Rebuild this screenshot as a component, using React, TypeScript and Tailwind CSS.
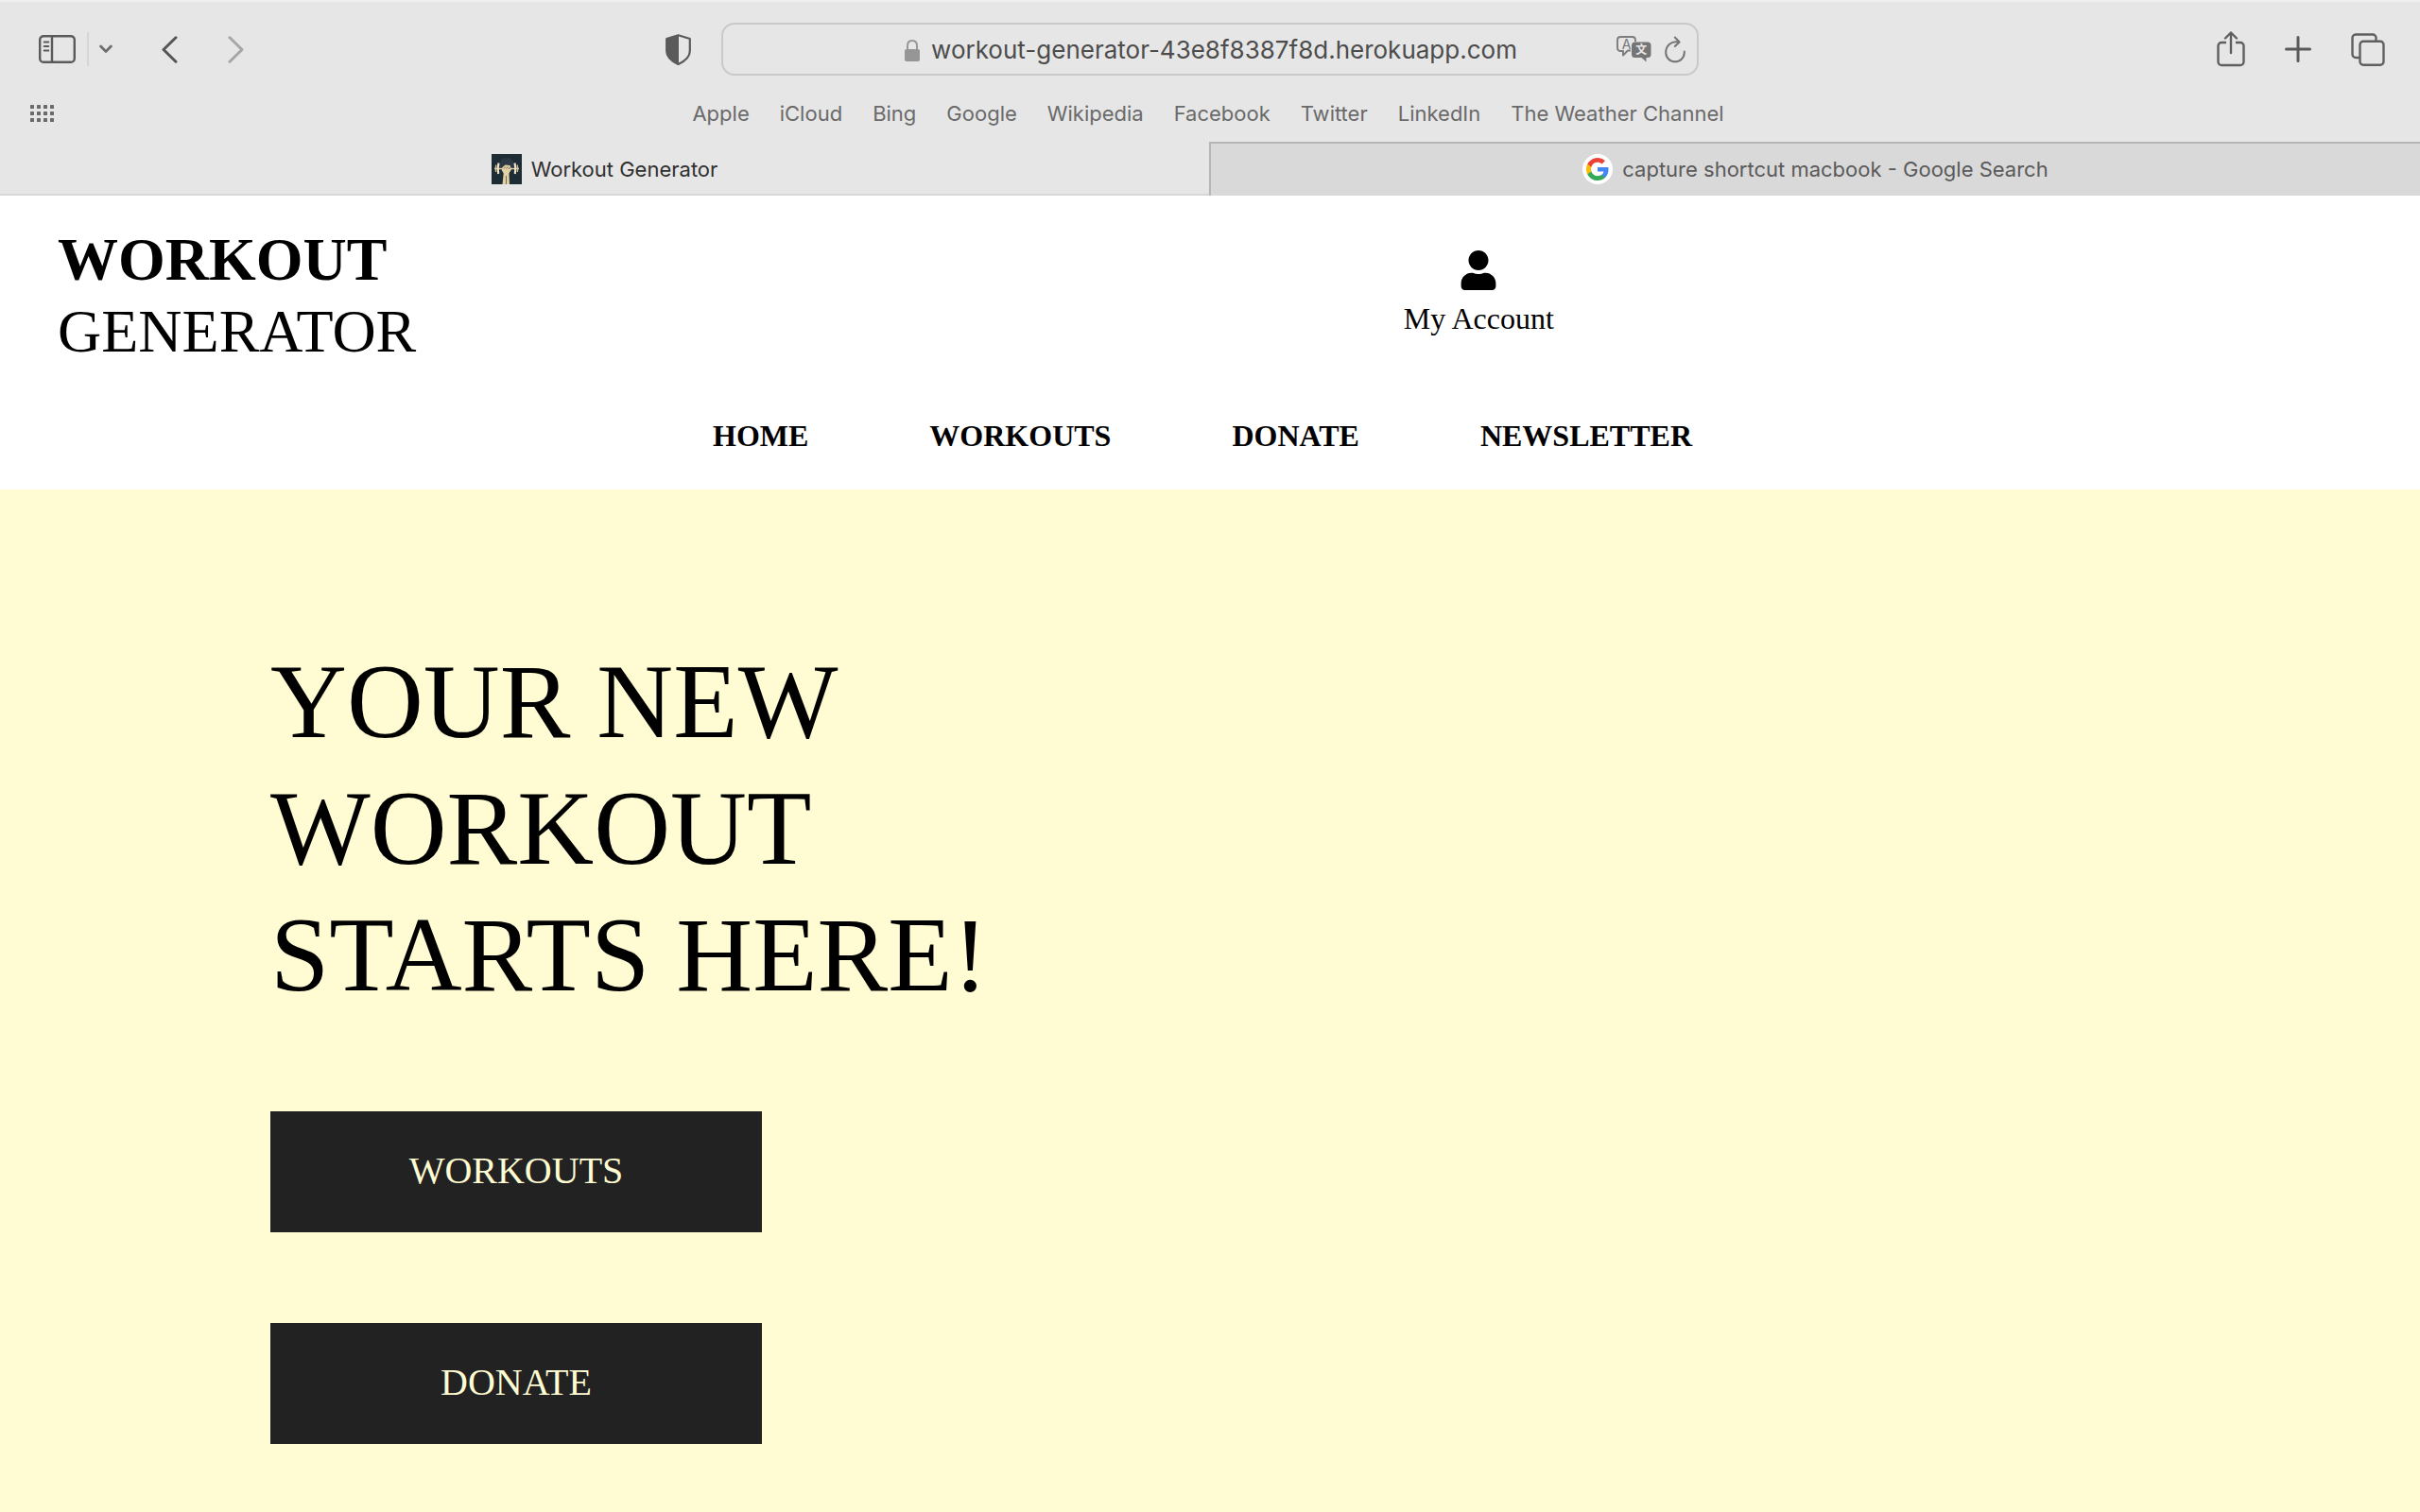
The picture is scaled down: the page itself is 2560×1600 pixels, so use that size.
import React from "react";
import { FaUser } from "react-icons/fa";

const bookmarks = [
  "Apple",
  "iCloud",
  "Bing",
  "Google",
  "Wikipedia",
  "Facebook",
  "Twitter",
  "LinkedIn",
  "The Weather Channel",
];

const navLinks = ["HOME", "WORKOUTS", "DONATE", "NEWSLETTER"];

const actions = ["WORKOUTS", "DONATE"];

function SidebarIcon() {
  return (
    <svg width="39" height="30" viewBox="0 0 39 30" fill="none" stroke="#5a5a5a" strokeWidth="2.4">
      <rect x="1.2" y="1.2" width="36.6" height="27.600" rx="3.800" />
      <path d="M14 1v28" />
      <path d="M5.600 7.500h4.800M5.600 12h4.800M5.600 16.500h4.800" strokeWidth="1.800" strokeLinecap="round" />
    </svg>
  );
}

function SmallChevron() {
  return (
    <svg width="14" height="10" viewBox="0 0 14 10" fill="none" stroke="#6e6e6e" strokeWidth="2.800" strokeLinecap="round" strokeLinejoin="round">
      <path d="M1.600 2l5.400 5.400L12.400 2" />
    </svg>
  );
}

function BackIcon() {
  return (
    <svg width="17" height="29" viewBox="0 0 17 29" fill="none" stroke="#555" strokeWidth="3" strokeLinecap="round" strokeLinejoin="round">
      <path d="M15 1.800L2 14.500 15 27.200" />
    </svg>
  );
}

function ForwardIcon() {
  return (
    <svg width="17" height="29" viewBox="0 0 17 29" fill="none" stroke="#a6a6a6" strokeWidth="3" strokeLinecap="round" strokeLinejoin="round">
      <path d="M2 1.800l13 12.700L2 27.200" />
    </svg>
  );
}

function ShieldIcon() {
  return (
    <svg width="27" height="33" viewBox="0 0 27 33">
      <path d="M13.500 1.200L25.800 5v13c0 6-5 10.600-12.300 14C6.200 28.600 1.200 24 1.200 18V5z" fill="none" stroke="#5a5a5a" strokeWidth="2.200" strokeLinejoin="round" />
      <path d="M14 1.200L1.200 5v13c0 6 5 10.600 12.800 14z" fill="#5a5a5a" />
    </svg>
  );
}

function LockIcon() {
  return (
    <svg width="16" height="23" viewBox="0 0 16 23">
      <rect x="0" y="10" width="16" height="13" rx="2" fill="#969696" />
      <path d="M3 11V6.500C3 3 5 1 8 1s5 2 5 5.500V11" fill="none" stroke="#969696" strokeWidth="1.900" />
    </svg>
  );
}

function TranslateIcon() {
  return (
    <svg width="37" height="28" viewBox="0 0 37 28">
      <path
        d="M15 15.500H12L7 20.500V16H4.500C2.300 16 1 14.700 1 12.500V4.500C1 2.300 2.300 1 4.500 1h12C18.700 1 20 2.300 20 4.500V6"
        fill="none"
        stroke="#7c7c7c"
        strokeWidth="1.900"
        strokeLinejoin="round"
      />
      <path d="M19.500 6.500H33A3.500 3.500 0 0 1 36.500 10v9.500A3.500 3.500 0 0 1 33 23h-1.500v4.500L26.500 23h-7A3.500 3.500 0 0 1 16 19.500V10A3.500 3.500 0 0 1 19.500 6.500z" fill="#757575" />
      <text x="10.500" y="13.500" textAnchor="middle" fontSize="14" fill="#757575" fontFamily="Inter, sans-serif">
        A
      </text>
      <text x="26.300" y="19" textAnchor="middle" fontSize="12" fontWeight="700" fill="#e6e6e6" fontFamily="'Noto Sans CJK SC', sans-serif">
        文
      </text>
    </svg>
  );
}

function ReloadIcon() {
  return (
    <svg width="22" height="30" viewBox="0 0 22 30" fill="none" stroke="#757575" strokeWidth="2" strokeLinecap="round" strokeLinejoin="round">
      <path d="M14.500 7.500C7 6 1.200 11.500 1.200 18.500A9.800 9.800 0 0 0 20.800 18.500V17.500" />
      <path d="M10.800 2.500l4.800 5-4.800 4.500" />
    </svg>
  );
}

function ShareIcon() {
  return (
    <svg width="30" height="38" viewBox="0 0 30 38" fill="none" stroke="#5f5f5f" strokeWidth="2.400" strokeLinecap="round" strokeLinejoin="round">
      <path d="M10 12H5a3.500 3.500 0 0 0-3.500 3.500v17A3.500 3.500 0 0 0 5 36h20a3.500 3.500 0 0 0 3.500-3.500v-17A3.500 3.500 0 0 0 25 12h-5" strokeLinecap="butt" />
      <path d="M15 23V2M9 7.500L15 1.500l6 6" />
    </svg>
  );
}

function PlusIcon() {
  return (
    <svg width="28" height="28" viewBox="0 0 28 28" fill="none" stroke="#5a5a5a" strokeWidth="3" strokeLinecap="round">
      <path d="M14 1.500v25M1.500 14h25" />
    </svg>
  );
}

function TabsIcon() {
  return (
    <svg width="36" height="35" viewBox="0 0 36 35" fill="none" stroke="#5f5f5f" strokeWidth="2.400">
      <path d="M9 26H5a3.500 3.500 0 0 1-3.500-3.500v-17A3.500 3.500 0 0 1 5 1.500h18a3.500 3.500 0 0 1 3.500 3.500v4" />
      <rect x="9.500" y="8.800" width="25" height="25" rx="3.500" />
    </svg>
  );
}

function FavoritesGridIcon() {
  return (
    <svg width="26" height="18" viewBox="0 0 26 18" fill="#6a6a6a">
      {[0, 7, 14].map((y) =>
        [0, 7, 14, 21].map((x) => <rect key={`${x}-${y}`} x={x} y={y} width="4" height="4" rx="0.500" />),
      )}
    </svg>
  );
}

function WorkoutFavicon() {
  return (
    <svg width="32" height="32" viewBox="0 0 32 32">
      <rect width="32" height="32" fill="#1d2c35" />
      <circle cx="16" cy="12" r="8" fill="#2b3a42" />
      <path d="M3 15.500h26" stroke="#e3d5b0" strokeWidth="1.400" />
      <path d="M7.500 9.500Q6 15 7.200 21" fill="none" stroke="#efe3c4" strokeWidth="2.200" />
      <path d="M4.800 11.500Q4 15 4.600 19" fill="none" stroke="#cbbf9f" strokeWidth="1.400" />
      <path d="M24.500 9.500Q26 15 24.800 21" fill="none" stroke="#efe3c4" strokeWidth="2.200" />
      <path d="M27.200 11.500Q28 15 27.400 19" fill="none" stroke="#cbbf9f" strokeWidth="1.400" />
      <path d="M11.500 14l3-2.500 5 .5 1.500 4-2.500 4.500.5 11.500h-7.500l1.200-11.500-2-3.500z" fill="#e3d0a4" />
      <path d="M13 15.500l2-2M15.500 15.500l2-2M18 16l1.500-2M15.500 23v9" stroke="#6b624d" strokeWidth="0.900" />
    </svg>
  );
}

function GoogleFavicon() {
  return (
    <svg width="32" height="32" viewBox="0 0 32 32">
      <circle cx="16" cy="16" r="16" fill="#fff" />
      <g transform="translate(4 4)">
        <path fill="#4285F4" d="M23.500 12.300c0-.8-.1-1.600-.2-2.300H12v4.500h6.500a5.600 5.600 0 0 1-2.400 3.600v3h3.900c2.200-2.100 3.500-5.100 3.500-8.800z" />
        <path fill="#34A853" d="M12 24c3.200 0 6-1.100 8-2.900l-3.900-3c-1.100.7-2.500 1.200-4.100 1.200-3.100 0-5.800-2.100-6.700-5H1.300v3.100A12 12 0 0 0 12 24z" />
        <path fill="#FBBC05" d="M5.300 14.300a7.200 7.200 0 0 1 0-4.600V6.600h-4a12 12 0 0 0 0 10.800z" />
        <path fill="#EA4335" d="M12 4.800c1.800 0 3.300.6 4.600 1.800L20 3.200A12 12 0 0 0 1.300 6.600l4 3.100c.9-2.900 3.600-4.900 6.700-4.900z" />
      </g>
    </svg>
  );
}

function Toolbar() {
  return (
    <div className="grid grid-cols-[1fr_40.4%_1fr] items-center pt-6">
      <div className="flex items-center justify-between pr-8 pl-[41px]">
        <div className="flex items-center">
          <button aria-label="Show sidebar"><SidebarIcon /></button>
          <span className="ml-3 h-9 w-0.5 bg-[#d6d6d6]" />
          <button aria-label="Sidebar options" className="ml-[11px]"><SmallChevron /></button>
          <button aria-label="Back" className="ml-[52px]"><BackIcon /></button>
          <button aria-label="Forward" className="ml-[53px]"><ForwardIcon /></button>
        </div>
        <button aria-label="Privacy report"><ShieldIcon /></button>
      </div>
      <div className="flex h-14 items-center rounded-[14px] border-2 border-[#c9c9c9] pr-3">
        <div className="flex flex-1 items-center justify-center gap-3 pt-0.5 pl-[87px]">
          <LockIcon />
          <input
            aria-label="Address"
            defaultValue="workout-generator-43e8f8387f8d.herokuapp.com"
            className="bg-transparent text-[26px] leading-8 text-[#4c4c4c] outline-none [field-sizing:content]"
          />
        </div>
        <button aria-label="Translate"><TranslateIcon /></button>
        <button aria-label="Reload" className="ml-3.5"><ReloadIcon /></button>
      </div>
      <div className="flex items-center justify-end pr-[37px]">
        <button aria-label="Share"><ShareIcon /></button>
        <button aria-label="New tab" className="ml-[42px]"><PlusIcon /></button>
        <button aria-label="Tab overview" className="ml-[42px]"><TabsIcon /></button>
      </div>
    </div>
  );
}

function BrowserChrome() {
  return (
    <header className="border-t-2 border-[#efefef] bg-[#e6e6e6] font-[Inter,sans-serif]">
      <div className="-mt-0.5">
        <Toolbar />
      </div>
      <div className="grid h-[70px] grid-cols-[1fr_auto_1fr] items-center pt-2.5 pl-8">
        <button aria-label="Favorites" className="justify-self-start"><FavoritesGridIcon /></button>
        <nav aria-label="Bookmarks" className="flex gap-8 pr-9 text-[22px] leading-7 text-[#6a6a6a]">
          {bookmarks.map((label) => (
            <a key={label} href="#">{label}</a>
          ))}
        </nav>
      </div>
      <div className="grid h-[57px] grid-cols-2 pr-0.5 text-[22px] leading-7">
        <button className="flex items-center justify-center gap-2.5 border-b-2 border-[#d6d6d6] pt-0.5 text-[#303030]">
          <WorkoutFavicon />
          Workout Generator
        </button>
        <button className="-mr-0.5 flex items-center justify-center gap-2.5 border-t-2 border-l-2 border-[#b6b6b6] bg-[#d9d9d9] pb-0.5 text-[#5a5a5a]">
          <GoogleFavicon />
          capture shortcut macbook - Google Search
        </button>
      </div>
    </header>
  );
}

function SiteHeader() {
  return (
    <div className="bg-white pt-[30px] pb-[38px]">
      <div className="grid grid-cols-[58%_auto] items-start">
        <h1 className="pl-[61px] text-[64px] leading-[76px]">
          <a href="#" className="inline-block">
            <span className="block font-bold">WORKOUT</span>
            <span className="block">GENERATOR</span>
          </a>
        </h1>
        <a href="#" className="mt-7 flex flex-col items-center gap-[11px] justify-self-start text-[32px] leading-[38px]">
          <FaUser size={42} />
          My Account
        </a>
      </div>
      <nav aria-label="Main" className="mt-[53px] flex justify-center gap-32 pr-4 text-[32px] leading-[38px] font-bold">
        {navLinks.map((label) => (
          <a key={label} href="#">{label}</a>
        ))}
      </nav>
    </div>
  );
}

function Hero() {
  return (
    <main className="flex flex-1 flex-col items-start bg-[#fffbd2] px-[286px] pt-[157px] pb-[72px]">
      <h2 className="text-[112px] leading-[134px]">
        YOUR NEW
        <br />
        WORKOUT
        <br />
        STARTS HERE!
      </h2>
      <div className="mt-[99px] flex flex-col gap-24">
        {actions.map((label) => (
          <button key={label} className="h-32 w-[520px] bg-[#222222] pb-0.5 text-[40px] leading-[46px] text-[#fffbd2]">
            {label}
          </button>
        ))}
      </div>
    </main>
  );
}

export default function App() {
  return (
    <div className="flex min-h-screen flex-col bg-white font-['Liberation_Serif',serif] text-black">
      <BrowserChrome />
      <SiteHeader />
      <Hero />
    </div>
  );
}
